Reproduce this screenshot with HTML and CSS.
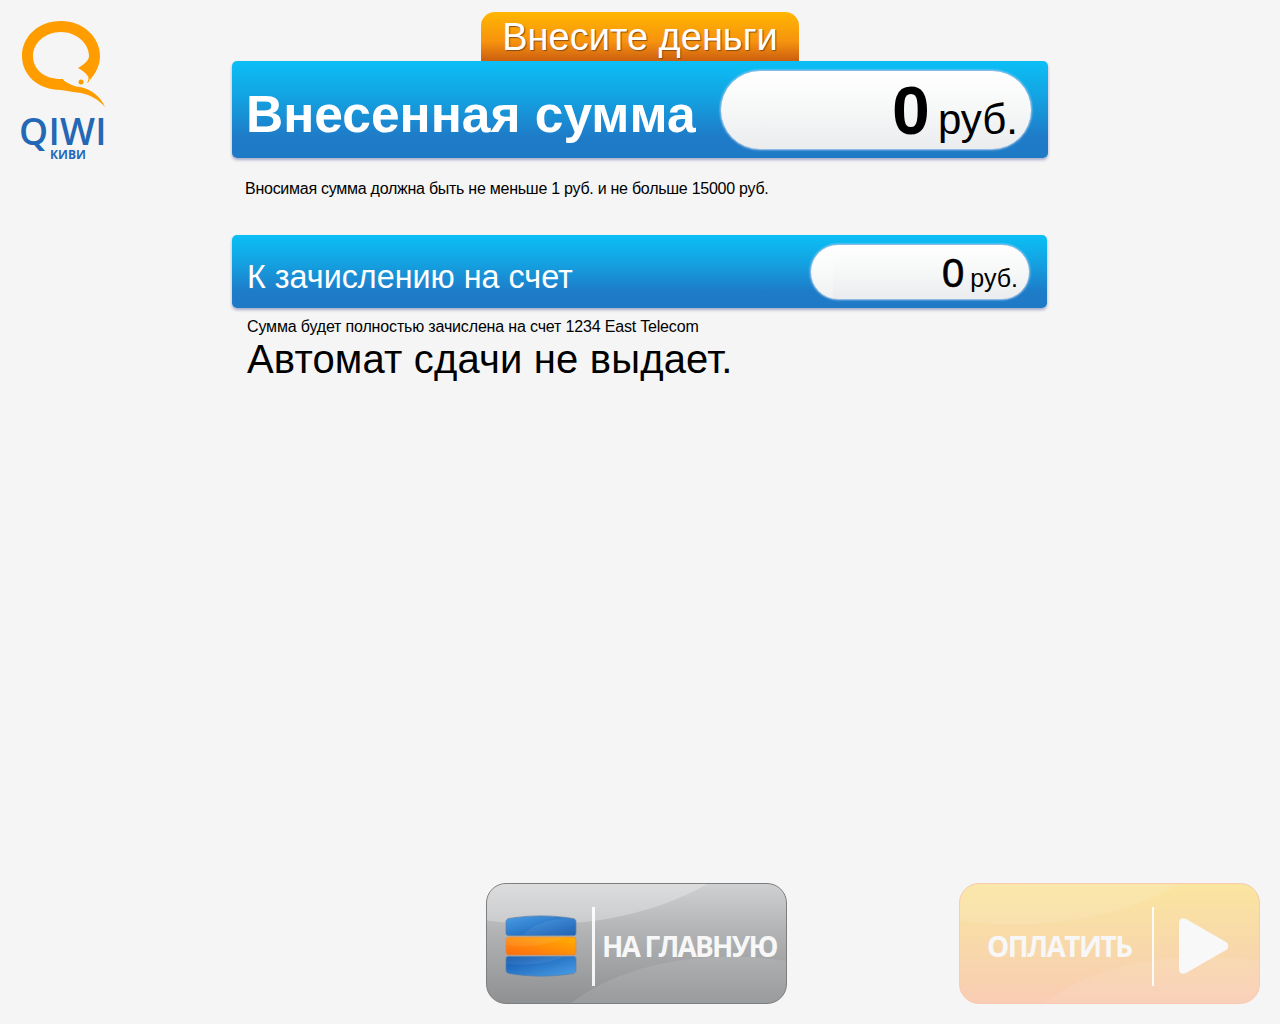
FILE: index.html
```html
<!DOCTYPE html>
<html lang="ru">
<head>
    <meta charset="UTF-8">
    <title>QIWI</title>
    <link rel="stylesheet" href="styles.css">
</head>
<body>
    <div class="page">
        <div class="top">
            <div class="logo">
                <svg class="logo-mark" viewBox="0 0 90 95" width="90" height="95">
                    <path fill="#ff9d00" fill-rule="evenodd" d="M42 2C19 2 3 18 3 37C3 56 19 71 42 71C45 71 47 71 49 70L44 60L42 60C26 60 14 51 14 37C14 24 26 13 42 13C57 13 70 24 70 37C70 41 66 45 59 49C65 52 69 56 71 61C77 54 81 46 81 37C81 18 64 2 42 2Z"/>
                    <path fill="#ff9d00" d="M44 61C50 65 56 68 61 68C72 70 82 78 86 88C80 81 72 76 62 74C54 73 48 72 42 71Z"/>
                    <circle fill="#ff9d00" cx="62" cy="63" r="2.5"/>
                    <path fill="#ff9d00" d="M69 58C71 59 71 63 68 64C69 62 70 60 69 58Z"/>
                </svg>
                <div class="logo-name">QIWI</div>
                <div class="logo-sub">КИВИ</div>
            </div>
            <div class="main">
                <div class="tab-row"><div class="tab">Внесите деньги</div></div>
                <div class="panel panel-big">
                    <div class="panel-title">Внесенная сумма</div>
                    <div class="pill pill-big"><b>0</b><span>руб.</span></div>
                </div>
                <p class="hint">Вносимая сумма должна быть не меньше 1 руб. и не больше 15000 руб.</p>
                <div class="panel panel-small">
                    <div class="panel-label">К зачислению на счет</div>
                    <div class="pill pill-small"><b>0</b><span>руб.</span></div>
                </div>
                <p class="note">Сумма будет полностью зачислена на счет 1234 East Telecom</p>
                <p class="warn">Автомат сдачи не выдает.</p>
            </div>
        </div>
        <div class="bottom">
            <div class="btn btn-home">
                <svg class="btn-bg" viewBox="0 0 301 121" preserveAspectRatio="none">
                    <path fill="#fff" fill-opacity="0.28" d="M0 37C90 50 170 30 222 0H0Z"/>
                    <path fill="#fff" fill-opacity="0.1" d="M85 121C130 85 210 65 301 78V121Z"/>
                </svg>
                <svg class="stack" viewBox="0 0 72 62" width="72" height="62">
                    <defs>
                        <linearGradient id="blue1" x1="0" y1="0" x2="1" y2="1">
                            <stop offset="0" stop-color="#4a9fe6"/>
                            <stop offset="1" stop-color="#0f56b0"/>
                        </linearGradient>
                        <linearGradient id="blue2" x1="0" y1="0" x2="1" y2="1">
                            <stop offset="0" stop-color="#0f56b0"/>
                            <stop offset="1" stop-color="#4a9fe6"/>
                        </linearGradient>
                        <linearGradient id="amber" x1="0" y1="1" x2="1" y2="0">
                            <stop offset="0" stop-color="#ff6a10"/>
                            <stop offset="1" stop-color="#ffb000"/>
                        </linearGradient>
                    </defs>
                    <path fill="url(#blue1)" stroke="#5a7fa8" stroke-width="0.7" d="M1 7C1 5 2 4 4 3.500C25 0 47 0 68 3.500C70 4 71 5 71 7V18C71 20 70 20.500 68 20.500H4C2 20.500 1 20 1 18Z"/>
                    <path fill="#fff" fill-opacity="0.07" d="M18 20C26 10 42 5 62 3L68 3.500C70 4 71 5 71 7V18C71 20 70 20.500 68 20.500Z"/>
                    <rect fill="url(#amber)" stroke="#d98a4a" stroke-width="0.7" x="1" y="22" width="70" height="18" rx="3"/>
                    <path fill="#fff" fill-opacity="0.08" d="M1 30C25 33 45 30 60 22H4C2 22 1 23 1 25Z"/>
                    <path fill="url(#blue2)" stroke="#5a7fa8" stroke-width="0.7" d="M1 44C1 42 2 41.500 4 41.500H68C70 41.500 71 42 71 44V55C71 57 70 58 68 58.500C47 62 25 62 4 58.500C2 58 1 57 1 55Z"/>
                    <path fill="#fff" fill-opacity="0.07" d="M1 49C25 51 45 48 60 41.500H4C2 41.500 1 42 1 44Z"/>
                </svg>
                <span class="divider"></span>
                <span class="btn-text">НА ГЛАВНУЮ</span>
            </div>
            <div class="btn btn-pay">
                <svg class="btn-bg" viewBox="0 0 301 121" preserveAspectRatio="none">
                    <path fill="#fff" fill-opacity="0.1" d="M0 37C90 50 170 30 222 0H0Z"/>
                    <path fill="#fff" fill-opacity="0.08" d="M85 121C130 85 210 65 301 78V121Z"/>
                </svg>
                <span class="btn-text">ОПЛАТИТЬ</span>
                <span class="divider"></span>
                <svg class="play" viewBox="0 0 50 56" width="50" height="56">
                    <path fill="#f8f8f8" d="M0 5C0 1 3 -1 7 1L47 24C50 26 50 30 47 32L7 55C3 57 0 55 0 51Z"/>
                </svg>
            </div>
        </div>
    </div>
</body>
</html>
```

FILE: styles.css
```css
body {
    margin: 0;
    background-color: #f5f5f5;
    font-family: "Liberation Sans", Arial, sans-serif;
    color: #000;
}
p {
    margin: 0;
}
.page {
    height: 1024px;
    display: flex;
    flex-direction: column;
    justify-content: space-between;
    overflow: hidden;
}
.top {
    display: flex;
}

/* logo */
.logo {
    width: 232px;
    padding: 19px 0 0 19px;
    box-sizing: border-box;
}
.logo-mark {
    display: block;
}
.logo-name {
    margin-top: 2px;
    height: 30px;
    font-family: "Open Sans", sans-serif;
    font-size: 37px;
    font-weight: 600;
    line-height: 30px;
    letter-spacing: 0.3px;
    color: #2467b5;
}
.logo-sub {
    margin: 2px 0 0 31px;
    font-family: "Open Sans", sans-serif;
    font-size: 12px;
    font-weight: 700;
    line-height: 14px;
    color: #2467b5;
}

/* main column */
.main {
    width: 816px;
    padding-top: 12px;
}
.tab-row {
    display: flex;
    justify-content: center;
}
.tab {
    width: 318px;
    height: 49px;
    box-sizing: border-box;
    border-radius: 14px 14px 0 0;
    background: linear-gradient(to bottom, #ffb600 0%, #f7930f 60%, #cc5e10 100%);
    color: #fff;
    font-size: 38px;
    line-height: 50px;
    text-align: center;
    text-shadow: 1px 1px 1px #8a4a10;
}
.panel {
    display: flex;
    align-items: center;
    justify-content: space-between;
    box-sizing: border-box;
    border-radius: 5px;
    background: linear-gradient(to bottom, #0bbff6 0%, #14a0e0 40%, #1e7bc8 78%, #1f7ac6 100%);
    box-shadow: 0 2px 3px rgba(70, 80, 150, 0.45);
}
.panel-big {
    height: 97px;
    padding: 0 16px 0 14px;
}
.panel-small {
    width: 815px;
    height: 73px;
    margin-top: 36px;
    padding: 0 17px 0 15px;
}
.panel-title {
    padding-top: 8px;
    color: #fff;
    font-size: 51.5px;
    font-weight: bold;
}
.panel-label {
    padding-top: 12px;
    color: #fff;
    font-size: 32.3px;
}
.pill {
    box-sizing: border-box;
    background: linear-gradient(to bottom, #fff 0%, #f6f7f7 50%, #ebecee 100%);
    border: 1px solid #8cb9e6;
    box-shadow: 0 0 2px rgba(255, 255, 255, 0.7);
    text-align: right;
    white-space: nowrap;
}
.pill-big {
    width: 312px;
    height: 80px;
    border-radius: 40px;
    padding-right: 13px;
    line-height: 78px;
}
.pill-big b {
    margin-right: 8px;
    font-size: 68px;
}
.pill-big span {
    font-size: 42px;
}
.pill-small {
    width: 220px;
    height: 56px;
    border-radius: 28px;
    padding-right: 11px;
    line-height: 57px;
    background: linear-gradient(to right, rgba(255, 255, 255, 0.25) 10%, transparent 10%), linear-gradient(to bottom, #fff 0%, #f6f7f7 50%, #ebecee 100%);
}
.pill-small b {
    margin-right: 6px;
    font-size: 40px;
    font-weight: normal;
    -webkit-text-stroke: 0.6px #000;
}
.pill-small span {
    font-size: 25px;
}
.hint {
    margin: 21px 0 0 13px;
    font-size: 16px;
    line-height: 20px;
    letter-spacing: -0.26px;
}
.note {
    margin: 9px 0 0 15px;
    font-size: 16px;
    line-height: 20px;
    letter-spacing: -0.16px;
}
.warn {
    margin: -1px 0 0 15px;
    font-size: 40px;
    line-height: 46px;
    letter-spacing: 0.17px;
}

/* bottom buttons */
.bottom {
    display: flex;
    justify-content: flex-end;
    gap: 172px;
    padding: 0 20px 20px 0;
}
.btn {
    position: relative;
    display: flex;
    align-items: center;
    width: 301px;
    height: 121px;
    box-sizing: border-box;
    padding-top: 5px;
    border-radius: 20px;
    overflow: hidden;
}
.btn-bg {
    position: absolute;
    left: 0;
    top: 0;
    width: 100%;
    height: 100%;
}
.btn-home {
    border: 1px solid #7d7e80;
    background: linear-gradient(to bottom, #cfd0d1 0%, #b2b3b5 40%, #8f9092 100%);
    padding-left: 18px;
}
.btn-pay {
    border: 1px solid #f9c9b0;
    background: linear-gradient(to bottom, #fae5a0 0%, #f8d9aa 50%, #f9cdb4 100%);
    padding-left: 27px;
}
.stack,
.divider,
.btn-text,
.play {
    position: relative;
    flex-shrink: 0;
}
.divider {
    width: 3px;
    height: 79px;
    background-color: #fff;
    opacity: 0.9;
}
.btn-home .divider {
    margin: 0 7px 0 15px;
}
.btn-pay .divider {
    width: 2px;
    margin: 0 25px 0 20px;
}
.btn-text {
    font-family: "Open Sans", sans-serif;
    font-size: 28px;
    font-weight: 700;
    letter-spacing: -1.5px;
    white-space: nowrap;
    color: #f7f7f7;
}
.btn-home .btn-text {
    letter-spacing: -1.8px;
}
```
